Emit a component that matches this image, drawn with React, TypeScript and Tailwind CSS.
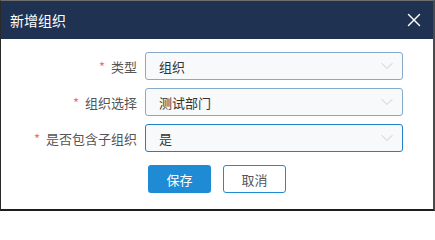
import { ChevronDown, X } from "lucide-react"

const ROWS = [
  { label: "类型", value: "组织", focused: false },
  { label: "组织选择", value: "测试部门", focused: false },
  { label: "是否包含子组织", value: "是", focused: true },
]

export default function App() {
  return (
    <div
      className="w-[435px] h-[211px] flex flex-col bg-white border-t border-t-[#6e6e6e] border-l border-l-[#2a2a2a] border-r-2 border-r-[#4a4a4a] border-b-2 border-b-[#1e1e1e]"
      style={{ fontFamily: '"Noto Sans CJK SC", "Noto Sans", sans-serif' }}
    >
      {/* Header */}
      <div className="h-[38px] shrink-0 bg-[#1f3252] flex items-center justify-between pl-[9px] pr-[8px]">
        <span className="text-white text-[14px] leading-none">新增组织</span>
        <X className="w-[22px] h-[22px] text-white" strokeWidth={1.6} />
      </div>

      {/* Form */}
      <div className="flex flex-col gap-[8px] pt-[13px]">
        {ROWS.map((r) => (
          <div key={r.label} className="flex items-center">
            <div className="w-[136px] text-right text-[13px] text-[#555] leading-none">
              <span className="text-[#f56c6c] mr-[6px]">*</span>
              {r.label}
            </div>
            <div
              className={
                "ml-[8px] w-[258px] h-[28px] rounded-[3px] bg-[#f8f9fb] flex items-center justify-between pl-[13px] pr-[5px] border " +
                (r.focused ? "border-[#1f80c8]" : "border-[#86a9c9]")
              }
            >
              <span className="text-[13px] text-[#333] leading-none">{r.value}</span>
              <ChevronDown className="w-[20px] h-[20px] text-[#c8ccd2]" strokeWidth={1.2} />
            </div>
          </div>
        ))}
      </div>

      {/* Actions */}
      <div className="flex gap-[12px] pl-[147px] pt-[13px]">
        <button className="w-[63px] h-[28px] rounded-[3px] bg-[#1e8bd4] text-white text-[13px] leading-none">
          保存
        </button>
        <button className="w-[63px] h-[28px] rounded-[3px] bg-white border border-[#1e8bd4] text-[#555] text-[13px] leading-none">
          取消
        </button>
      </div>
    </div>
  )
}
